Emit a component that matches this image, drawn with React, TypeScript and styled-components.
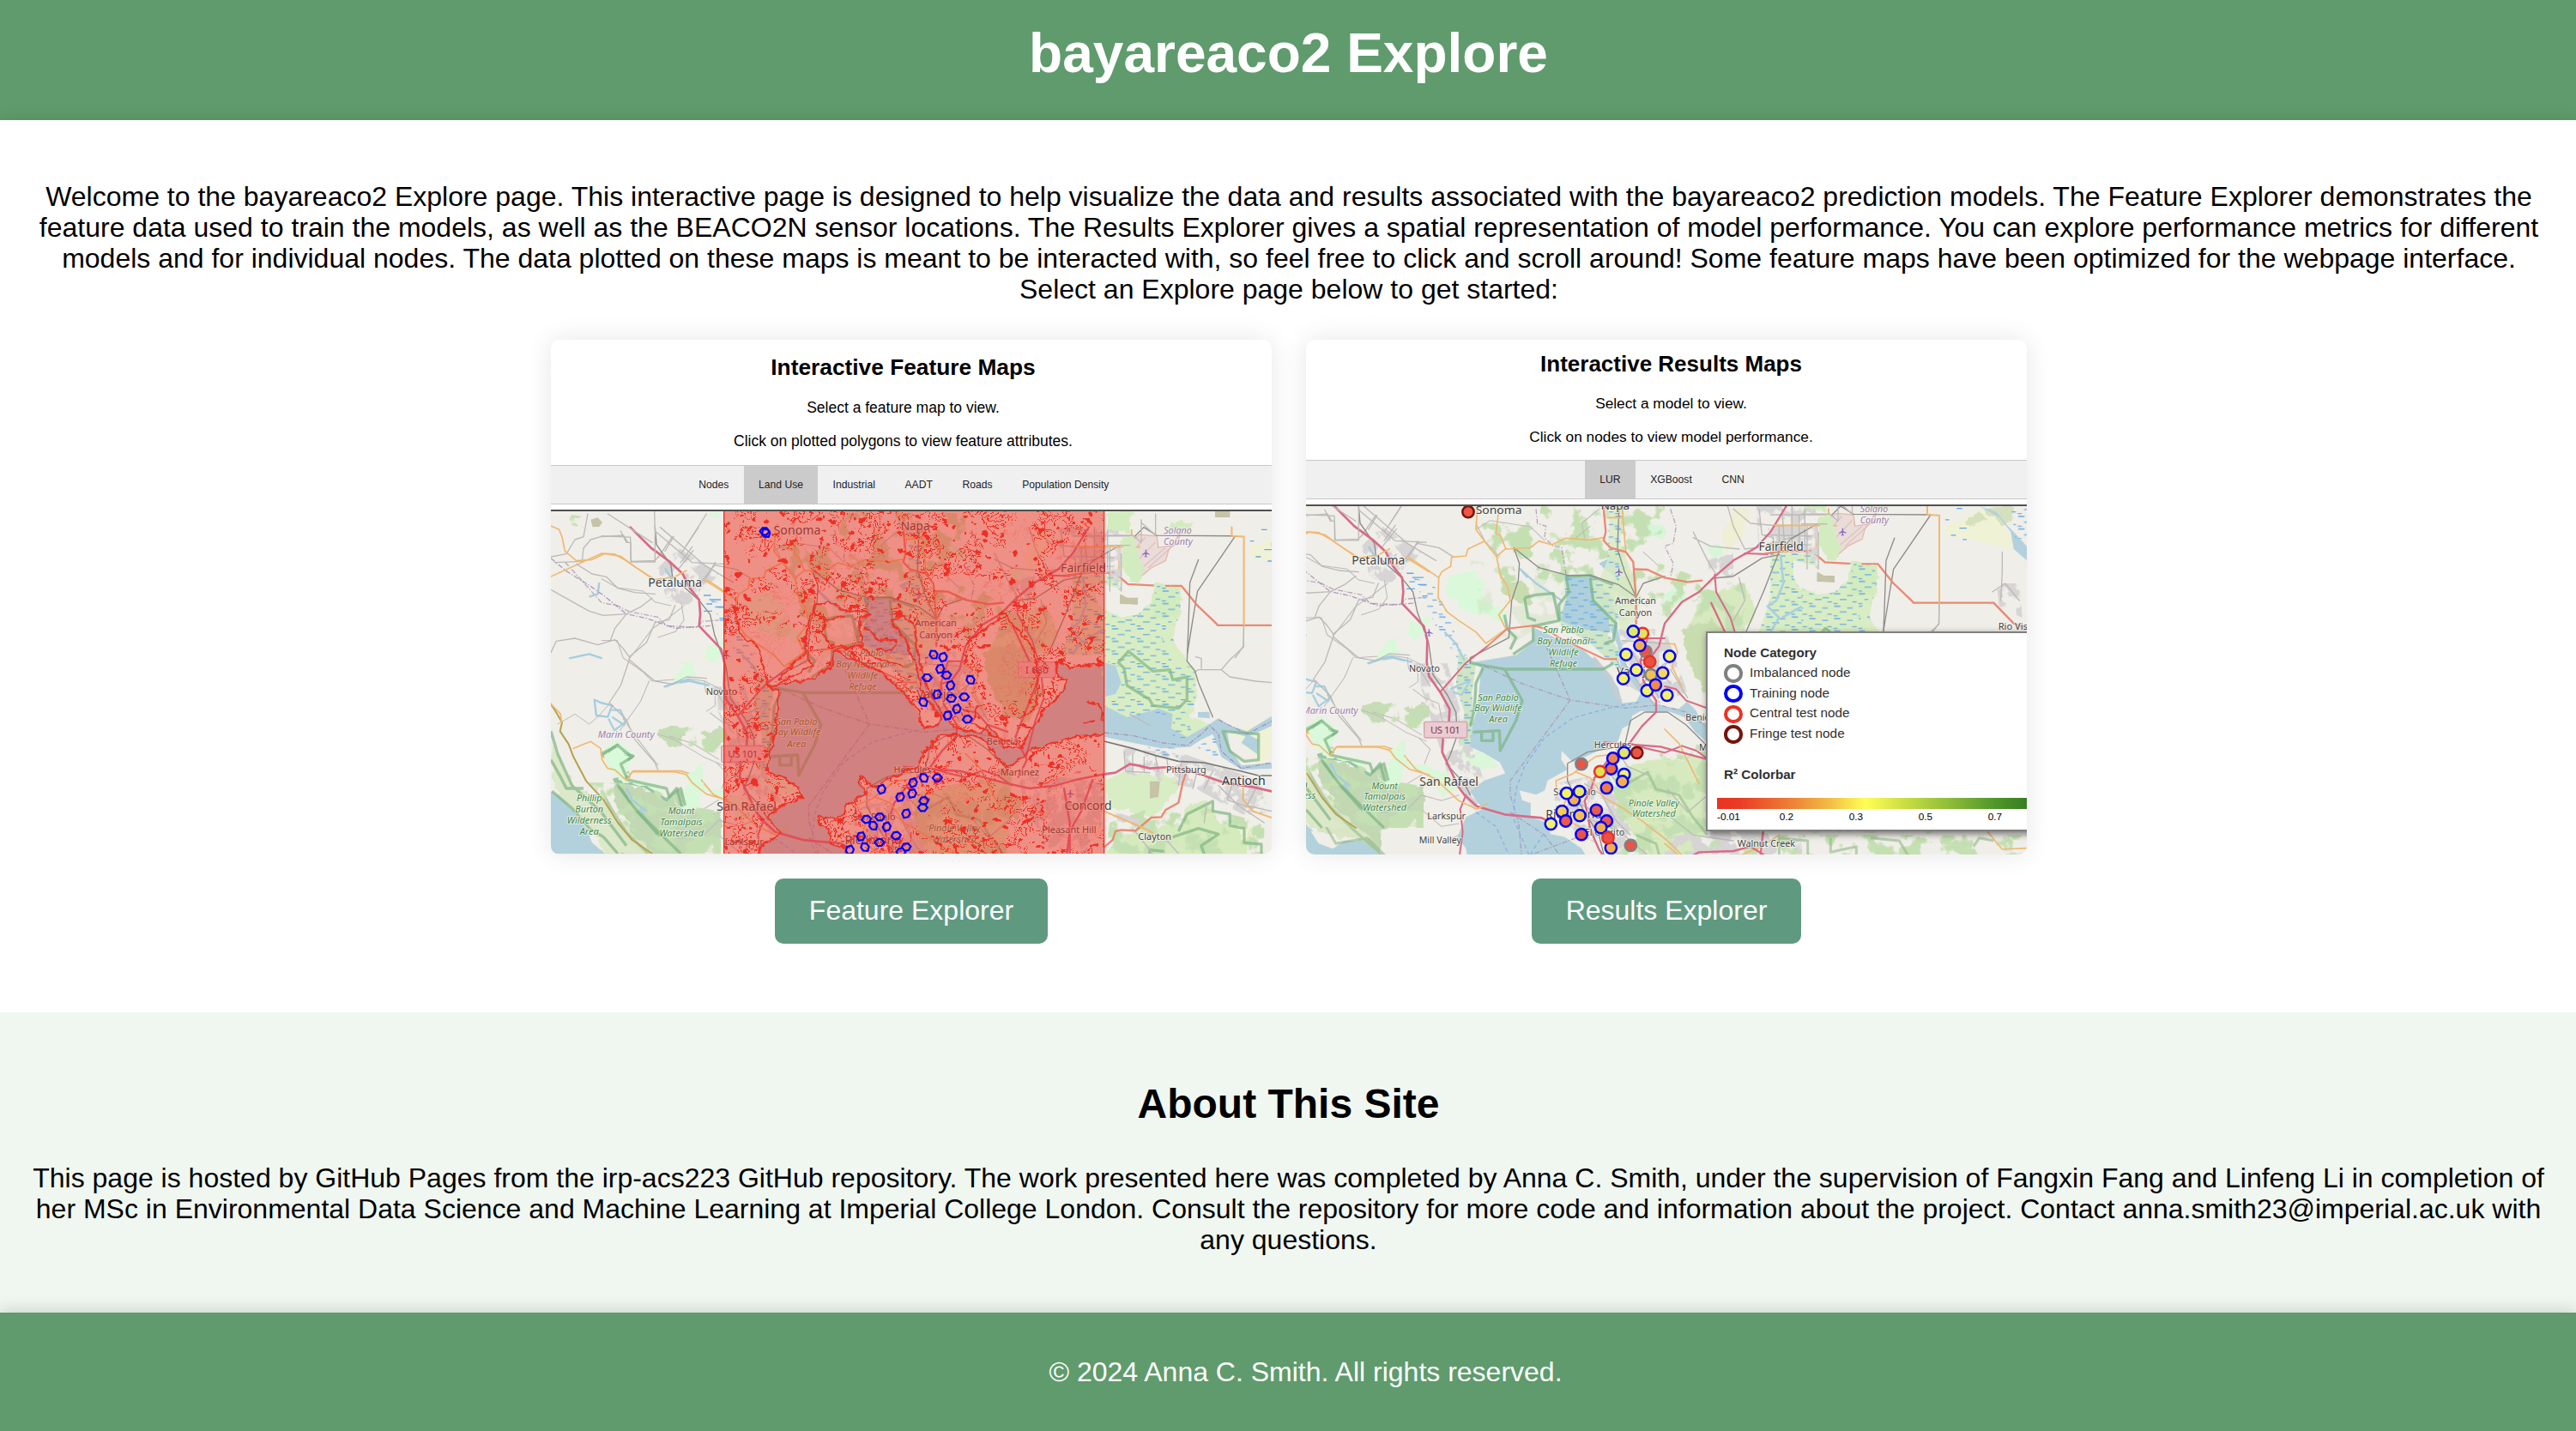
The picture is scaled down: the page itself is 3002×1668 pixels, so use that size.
import React from 'react';
import styled, { createGlobalStyle } from 'styled-components';
import { MdAirplanemodeActive } from 'react-icons/md';

const GlobalStyle = createGlobalStyle`
  * { box-sizing: border-box; }
  body {
    margin: 0;
    background: #fff;
    color: #000;
    font-family: Arial, "Liberation Sans", sans-serif;
    font-size: 32px;
    line-height: 36px;
  }
`;

const Page = styled.div`
  display: flex;
  flex-direction: column;
  min-height: 1668px;
`;

const Header = styled.header`
  height: 140px;
  padding: 26px 0 0 1px;
  background: #5f9b6c;
  color: #fff;
  text-align: center;
`;

const Title = styled.h1`
  margin: 0;
  font-size: 64px;
  line-height: 73px;
`;

const Main = styled.main`
  position: relative;
  height: 1040px;
  padding: 71px 39px 0 41px;
  background: #fff;
  box-shadow: 0 0 20px rgba(0, 0, 0, 0.1);
  text-align: center;
`;

const Paragraph = styled.p`
  margin: 0;
`;

const Explorers = styled.div`
  display: flex;
  justify-content: center;
  gap: 40px;
  margin-top: 41px;
`;

const Explorer = styled.div`
  display: flex;
  flex-direction: column;
  align-items: center;
  gap: 28px;
`;

const Card = styled.div`
  display: flex;
  flex-direction: column;
  width: 840px;
  height: 600px;
  overflow: hidden;
  border-radius: 10px;
  background: #fff;
  box-shadow: 0 0 30px rgba(0, 0, 0, 0.1);
`;

const CardHead = styled.div<{ $height: number; $top: number; $left?: number; $right?: number }>`
  flex: none;
  height: ${(p) => p.$height}px;
  padding: ${(p) => `${p.$top}px ${p.$right ?? 0}px 0 ${p.$left ?? 0}px`};
`;

const CardTitle = styled.h3<{ $size: number }>`
  margin: 0 0 21.5px;
  font-size: ${(p) => p.$size}px;
  line-height: 30px;
`;

const CardLine = styled.p<{ $size: number }>`
  margin: 0 0 19.3px;
  font-size: ${(p) => p.$size}px;
  line-height: 20px;
`;

const TabBar = styled.div<{ $start: number }>`
  display: flex;
  flex: none;
  height: 46px;
  padding-left: ${(p) => p.$start}px;
  border-top: 1px solid #c8c8c8;
  border-bottom: 1px solid #c8c8c8;
  background: #f0f0f0;
`;

const Tab = styled.span<{ $active?: boolean }>`
  padding: 0 17.3px;
  background: ${(p) => (p.$active ? '#cbcbcb' : 'transparent')};
  color: #222;
  font-size: 12.15px;
  line-height: 45px;
  white-space: nowrap;
`;

const MapFrame = styled.div`
  position: relative;
  flex: 1;
  min-height: 0;
  margin-top: 6px;
  border-top: 2px solid #505050;
  overflow: hidden;
  background: #f0eee8;
  svg { display: block; }
`;

const Button = styled.a`
  padding: 19px 40px 21px;
  border-radius: 10px;
  background: #5f9a80;
  color: #fff;
  white-space: nowrap;
`;

const About = styled.section`
  position: relative;
  height: 350px;
  padding: 79px 33px 0 34px;
  background: #f0f7f1;
  text-align: center;
`;

const Heading = styled.h2`
  margin: 0 0 40px;
  font-size: 48px;
  line-height: 56px;
`;

const Footer = styled.footer`
  position: relative;
  height: 138px;
  padding: 51px 0 0 41px;
  background: #5f9b6c;
  color: #fff;
  box-shadow: 0 0 20px rgba(0, 0, 0, 0.2);
  text-align: center;
`;

const Legend = styled.div`
  position: absolute;
  left: 466px;
  top: 146px;
  width: 460px;
  height: 233px;
  padding: 13px 0 0 19px;
  border: 2px solid #808080;
  background: #fff;
  box-shadow: 2px 3px 8px rgba(0, 0, 0, 0.55);
  color: #303030;
  font-size: 15.3px;
  text-align: left;
`;

const LegendTitle = styled.div`
  font-weight: bold;
  font-size: 15.2px;
  line-height: 19px;
`;

const LegendRows = styled.div`
  margin: 3px 0 24.5px;
`;

const LegendRow = styled.div`
  display: flex;
  align-items: center;
  gap: 8.5px;
  height: 23.8px;
`;

const Ring = styled.span<{ $color: string }>`
  width: 21.6px;
  height: 21.6px;
  border: 4.4px solid ${(p) => p.$color};
  border-radius: 50%;
`;

const LegendLabel = styled.span`
  padding-bottom: 2.4px;
  line-height: 18px;
`;

const ColorBar = styled.div`
  height: 13px;
  margin: 18px 0 2px -8px;
  background: linear-gradient(
    to right,
    #ea3323 0, #ea3a24 25px, #ee8436 90px, #f3bb45 130px, #fffe54 173px,
    #cfe045 215px, #8fbd38 270px, #4f962a 325px, #377e22 361px
  );
`;

const Scale = styled.div`
  display: flex;
  margin-left: -8px;
  color: #000;
  font-size: 11.8px;
  line-height: 14px;
`;

const Tick = styled.span<{ $width: number }>`
  width: ${(p) => p.$width}px;
`;

/* Map geometry: three map units make one pixel of the card. */

const MAP_FONT = '"Noto Sans", "Open Sans", sans-serif';
const NORTH = 'scale(1.0142) translate(174 67)';
const SOUTH = 'translate(-174 -67) scale(0.986)';
const CENTRE = 'translate(660 630)';

const WATER = '#b3d1dc';
const BAY =
  'M165 632L330 605L385 560L395 510L440 530L500 560L570 590L640 655L690 720L705 775L755 770L770 740L700 650L688 570L655 500L650 460L610 430L600 400L640 385L675 420L690 520L720 640L780 740L825 778L865 790L905 796L935 770L965 800L990 845L1055 848L1070 810L1130 720L1200 640L1213 612L1180 600L1172 545L1220 568L1345 555L1345 800L1240 808L1150 835L1080 860L1040 890L1010 918L965 880L925 825L870 805L770 803L740 820L735 850L705 865L690 910L640 935L560 972L530 985L490 945L488 975L512 1010L440 1050L430 1085L400 1100L340 1085L350 1120L380 1130L380 1180L440 1200L450 1240L500 1250L560 1290L590 1340L160 1340L150 1290L120 1250L150 1180L210 1150L165 1090L215 1050L290 1025L270 985L210 950L165 930L170 860L190 800L205 650Z';

type Line = { d: string; c: string; w: number };

const MOTOR = '#d96a86';
const TRUNK = '#e98972';
const PRIMARY = '#f0b872';
const MINOR = '#bcbab9';
const RAIL = '#8d8b8a';

const northRoads: Line[] = [
  { d: 'M-109 800L66 720L110 722L150 745L230 800M430 812L470 838L530 880L528 950L560 1000L600 1030L660 1070L695 1110L765 1060M530 880L540 860L572 840L575 808L625 804L632 780L690 752L715 785L732 805L765 778M690 752L660 712L665 640M732 805L745 870L770 910L780 960L740 1010L765 1060M740 640L730 726L745 732L765 780L850 775L880 752L925 765L975 742L1060 748L1106 740', c: PRIMARY, w: 5 },
  { d: 'M1172 640L1176 700L1184 786M1118 670L1172 670', c: PRIMARY, w: 5 },
  { d: 'M165 630L235 700L300 748L345 790L370 840L402 880L406 930L402 970L440 1010L478 1050L490 1100L488 1175L496 1225L535 1280L568 1340L565 1400L545 1440L542 1490L570 1550L598 1610L620 1640L664 1680L760 1708L890 1720L920 1735', c: MOTOR, w: 8 },
  { d: 'M625 1640L605 1690L614 1770L603 1850M535 1280L625 1178L700 1120', c: MOTOR, w: 6 },
  { d: 'M700 1120L770 1058L860 1048L900 1058L960 1095L1110 1165L1150 1165', c: TRUNK, w: 6 },
  { d: 'M1106 635L1114 720L1106 750L1130 775L1184 790L1210 825L1220 960L1220 1040M1215 850L1260 852L1320 880L1400 895L1450 890', c: TRUNK, w: 7 },
  { d: 'M1745 630L1690 720L1640 775L1560 820L1490 880L1440 930L1380 965L1320 1040L1300 1120L1270 1160L1235 1170L1245 1240L1290 1310L1290 1350L1240 1400L1200 1455L1120 1520L1075 1580L1062 1620L1040 1660L1060 1760L1090 1830L1110 1860', c: MOTOR, w: 7 },
  { d: 'M1495 870L1500 930L1550 1020L1580 1120L1590 1220L1560 1300L1530 1420M1235 1170L1260 1092L1320 1092M1320 1260L1360 1270L1395 1310L1465 1335', c: MOTOR, w: 6 },
  { d: 'M1200 1460L1260 1478L1320 1492L1380 1468L1430 1485L1480 1520M1600 795L1680 798', c: MOTOR, w: 6 },
  { d: 'M1670 796L1740 786L1835 787L1880 826L1990 832L2065 832L2120 900L2185 962L2190 968L2470 968L2540 1040L2590 1060', c: TRUNK, w: 7 },
  { d: 'M1705 697L1920 698M1893 640L1893 697M1850 700L1850 786M2238 630L2238 660L2280 662L2280 970', c: PRIMARY, w: 6 },
  { d: 'M66 1420L110 1435L120 1470L150 1500L175 1470L340 1470L400 1490L450 1550L520 1585L600 1660L664 1690L700 1670', c: PRIMARY, w: 5 },
  { d: 'M942 1620L940 1590L1000 1565L1030 1540L1080 1505L1120 1500M980 1640L960 1700L1000 1740L1060 1770M1010 1560L1060 1580L1110 1650L1180 1690L1240 1730L1330 1800L1380 1850', c: PRIMARY, w: 5 },
  { d: 'M1320 1110L1355 1112L1365 1140L1345 1190L1380 1260M1320 1410L1370 1460L1440 1600M1585 1850L1660 1820L1720 1780M1320 1810L1380 1860M2450 1770L2500 1830L2586 1826', c: PRIMARY, w: 5 },
  { d: 'M1400 1860L1440 1840L1560 1836L1620 1820L1700 1870M1655 1850L1665 1760', c: MOTOR, w: 7 },
];

const northRails: Line[] = [
  { d: 'M250 630L255 690L305 760L310 800L400 880L440 930L455 1000L495 1110L510 1220L560 1290L590 1350L595 1430L570 1500L555 1530L620 1600L640 1640', c: RAIL, w: 4 },
  { d: 'M792 775L812 830L808 890L785 960L775 1090L640 1160L640 1180M792 775L880 845L980 872L1060 872L1160 905L1220 948L1245 900L1320 875M1160 640L1155 780L1180 860L1220 948', c: RAIL, w: 4 },
  { d: 'M1935 630L1900 665L1760 745L1720 790L1665 930L1605 1068M1935 630L1980 658L2250 660L2120 850L2110 910L2085 1065M1720 800L1660 812L1560 875L1490 882', c: RAIL, w: 4 },
  { d: 'M980 1590L980 1530L1050 1490L1180 1468L1200 1380L1250 1350L1330 1350L1395 1395L1470 1470M980 1590L1010 1650L1090 1780L1110 1860', c: RAIL, w: 4 },
];

const northMinor: Line[] = [
  { d: 'M66 660L165 664L168 748L250 745L262 730M268 630L420 760L520 820M400 630L340 720M310 662L260 735M382 710L330 775M460 755L400 830M455 760L530 775L578 805', c: MINOR, w: 4 },
  { d: 'M66 808L120 838L210 850L250 888L305 900M66 1020L120 1020L140 1080L210 1130L240 1160L360 1152L420 1160L500 1200M160 1085L195 1040L240 980L300 940L350 900M230 1160L200 1230L130 1330M140 1290L190 1360L260 1450M340 890L350 950L320 990L260 1010', c: MINOR, w: 3 },
  { d: 'M420 1160L425 1200L470 1210L500 1260M440 1270L480 1300L530 1320L545 1400L520 1440M300 1350L380 1375L470 1430M460 1440L500 1480L480 1530M420 1600L470 1570M330 1700L420 1690L470 1640L540 1660L600 1640M480 1700L540 1750L600 1740M560 1800L600 1780', c: MINOR, w: 3 },
  { d: 'M660 712L710 680L850 702L880 730L900 750M1040 740L1030 690L1090 640M660 690L690 750L735 800M1010 740L1060 700M1245 790L1300 840', c: MINOR, w: 3 },
  { d: 'M1540 630L1560 700L1600 780L1680 770L1760 740M1420 720L1470 820L1500 870M1420 740L1480 770L1580 780M1560 640L1620 690L1730 700M1650 640L1660 730L1700 740L1700 800M1730 640L1740 780M1790 660L1790 790M1660 730L1830 735M1680 760L1830 765M1720 700L1720 790M1765 630L1765 790M1810 640L1810 780', c: MINOR, w: 4 },
  { d: 'M2280 970L2278 1040L2250 1080M2500 790L2500 860L2495 960M2465 930L2510 900L2560 960M1690 660L1900 660M1580 880L1600 960L1560 1030', c: MINOR, w: 4 },
  { d: 'M960 1640L1080 1700L1140 1760M1000 1620L1020 1700L1090 1740M940 1680L1010 1720M1040 1600L1100 1640L1150 1730L1200 1780M1100 1540L1160 1600M1150 1480L1190 1540L1260 1570M1120 1730L1200 1800L1260 1850M1330 1620L1400 1700L1470 1640M1320 1700L1420 1780L1560 1800', c: MINOR, w: 4 },
  { d: 'M1170 1100L1320 1110M1200 1130L1300 1300M1180 1180L1280 1320M1230 1110L1340 1250M1320 1180L1230 1260M1350 1140L1260 1290M1340 1200L1400 1300M1150 1160L1190 1260', c: MINOR, w: 4 },
];

const southRoads: Line[] = [
  { d: 'M66 702L95 715L106 745L115 790L155 824L210 820L255 799L310 808L360 845L430 890L500 880L540 858M600 890L680 940', c: PRIMARY, w: 5 },
  { d: 'M66 1325L88 1360L105 1390L98 1420L128 1465L145 1510L190 1595L250 1660L300 1740L350 1800L420 1848', c: '#b5a24f', w: 6 },
  { d: 'M66 1325L100 1360L103 1390M145 1480L205 1456L240 1480L245 1520L265 1550L290 1555L330 1592L350 1562L500 1562L540 1572L560 1600L610 1640L680 1660', c: PRIMARY, w: 5 },
  { d: 'M2000 1570L2040 1565L2090 1535L2120 1540L2160 1550L2230 1545L2320 1565L2420 1600L2520 1615L2586 1630L2800 1700', c: MOTOR, w: 8 },
  { d: 'M2000 1825L2030 1800L2040 1770L2060 1765L2110 1768L2165 1722L2200 1720L2215 1695L2260 1670L2275 1600L2285 1570', c: TRUNK, w: 7 },
  { d: 'M2000 1700L2060 1725L2130 1755L2170 1775M2486 1620L2486 1660L2520 1700L2586 1722', c: PRIMARY, w: 6 },
  { d: 'M1300 1545L1500 1560L1650 1600L1740 1620L1830 1610L1900 1590L2000 1570M1860 1620L1880 1740L1880 1848M1960 1590L1920 1700L1880 1770L1870 1848M1700 1580L1730 1520L1690 1440L1770 1240L1680 1050', c: MOTOR, w: 7 },
];

const southRails: Line[] = [
  { d: 'M2000 1455L2100 1480L2180 1505L2260 1525L2350 1530L2480 1560L2540 1575L2586 1575', c: '#757575', w: 5 },
  { d: 'M2330 820L2300 900L2295 1050L2290 1175L2318 1210L2330 1250L2380 1370', c: RAIL, w: 4 },
];

const southMinor: Line[] = [
  { d: 'M66 810L120 800L150 750L180 740L195 660M80 830L175 826L180 780L205 750L240 740L320 735L335 760L345 760L345 828L430 828L430 700M265 660L420 760M310 720L330 760M428 650L430 720L560 830L670 835M495 740L465 790M560 775L520 830M610 660L540 770M640 830L600 900', c: MINOR, w: 4 },
  { d: 'M155 835L210 870L260 880L300 920L360 935L430 940M66 925L110 950L200 1000L250 1015L330 1010L380 985L420 955M66 1145L85 1105L150 1095L230 1118L290 1100L318 1130L340 1160L340 1170L430 1245L490 1255L540 1230L610 1235M340 1160L400 1110L430 1040L480 1030L500 980M330 1010L290 1060L275 1100M340 1170L310 1260L270 1320L330 1380L360 1450L430 1530L440 1555', c: MINOR, w: 4 },
  { d: 'M90 1395L150 1360L200 1395L230 1370L270 1325M440 1430L500 1450L600 1510L670 1540M610 1350L640 1330L640 1280', c: MINOR, w: 3 },
  { d: 'M2320 1210L2330 1205L2410 1205L2440 1230L2530 1245L2586 1250M2410 1205L2440 1170L2488 1125L2488 1050M2320 1160L2340 1165L2340 1200', c: MINOR, w: 4 },
  { d: 'M2070 1490L2075 1560L2160 1565M2100 1500L2100 1560M2140 1510L2140 1560M2180 1510L2190 1560M2220 1520L2225 1560M2270 1530L2260 1610M2330 1540L2310 1620M2380 1560L2350 1620M2400 1610L2470 1680L2560 1740M2450 1600L2430 1660L2520 1690M2540 1600L2500 1680L2586 1700M2360 1670L2350 1740M2200 1780L2260 1848M2100 1760L2170 1848', c: MINOR, w: 4 },
  { d: 'M2130 680L2130 760L2100 735L2000 735M2180 660L2180 735L2130 690M2000 770L2090 770M2060 800L2060 930M2020 780L2020 930M2090 1360L2160 1400', c: MINOR, w: 4 },
];

const Lines = ({ items }: { items: Line[] }) => (
  <>
    {items.map((l, i) => (
      <path key={i} d={l.d} fill="none" stroke={l.c} strokeWidth={l.w} strokeLinejoin="round" strokeLinecap="round" />
    ))}
  </>
);

type LabelProps = {
  x: number; y: number; w: number; s?: number; c?: string; i?: boolean; children: string;
};

const Label = ({ x, y, w, s = 34, c = '#444', i, children }: LabelProps) => (
  <text
    x={x} y={y} textAnchor="middle" textLength={w} lengthAdjust="spacingAndGlyphs"
    fontFamily={MAP_FONT} fontSize={s} fontStyle={i ? 'italic' : 'normal'} fill={c}
    stroke="#f6f5f1" strokeWidth={6} strokeOpacity={0.75} paintOrder="stroke" strokeLinejoin="round"
  >
    {children}
  </text>
);

const Plane = ({ x, y }: { x: number; y: number }) => (
  <MdAirplanemodeActive x={x - 24} y={y - 24} width={48} height={48} color="#8a69c4" />
);

const PARK = '#3d8a46';
const COUNTY = '#a080b0';

const Basemap = ({ id }: { id: string }) => {
  const f = (name: string) => `url(#${id}-${name})`;
  return (
    <>
      <defs>
        <pattern id={`${id}-marsh`} width="88" height="44" patternUnits="userSpaceOnUse">
          <path d="M4 6h22M50 12h20M24 26h24M68 34h16M2 40h14" stroke="#65a9e6" strokeWidth="4" />
        </pattern>
        <filter id={`${id}-mottle`} x="0" y="0" width="1" height="1" colorInterpolationFilters="sRGB">
          <feTurbulence type="fractalNoise" baseFrequency="0.014" numOctaves="5" seed="8" result="n" />
          <feColorMatrix in="n" values="0 0 0 0 0.77  0 0 0 0 0.88  0 0 0 0 0.70  0 0 0 12 -6.1" result="m" />
          <feComposite in="m" in2="SourceGraphic" operator="in" />
        </filter>
        <filter id={`${id}-town`} x="0" y="0" width="1" height="1" colorInterpolationFilters="sRGB">
          <feTurbulence type="fractalNoise" baseFrequency="0.02" numOctaves="4" seed="3" result="n" />
          <feColorMatrix in="n" values="0 0 0 0 0.84  0 0 0 0 0.83  0 0 0 0 0.83  0 0 0 12 -5.5" result="m" />
          <feComposite in="m" in2="SourceGraphic" operator="in" />
        </filter>
        <filter id={`${id}-rough`} x="-0.1" y="-0.1" width="1.2" height="1.2">
          <feTurbulence type="fractalNoise" baseFrequency="0.03" numOctaves="3" seed="5" />
          <feDisplacementMap in="SourceGraphic" scale="34" xChannelSelector="R" yChannelSelector="G" />
        </filter>
      </defs>

      <rect x="-200" y="500" width="3100" height="1500" fill="#f0eee8" />

      <g transform={NORTH}>
        <g filter={f('rough')}>
          <path d="M560 880L650 850L690 900L690 960L770 1000L760 1040L640 1000L560 950Z" fill="#daf8da" />
          <path d="M340 1100L380 1090L390 1150L350 1160ZM420 1040L500 1020L480 1080L430 1080ZM66 1400L120 1370L175 1410L150 1480L90 1450Z" fill="#daf8da" />
          <path d="M1220 680L1320 700L1320 750L1250 730ZM1465 770L1510 760L1530 800L1480 810ZM1320 930L1380 920L1400 960L1340 980Z" fill="#d6f6d8" />
          <path d="M350 1480L420 1450L420 1520L560 1560L600 1620L540 1640L480 1560L380 1530ZM600 1480L700 1500L740 1540L650 1560Z" fill="#dbf6d9" />
          <path d="M260 1330L300 1310L350 1330L340 1380L290 1390ZM410 1340L490 1320L500 1360L440 1400Z" fill="#c6dcb6" />
          <path d="M110 1510L200 1530L290 1570L340 1540L360 1600L480 1610L480 1700L420 1740L330 1760L320 1848L250 1800L180 1700L110 1580Z" fill="#c1d8b3" />
          <path d="M-109 1560L-20 1530L66 1560L130 1640L230 1740L300 1800L120 1780L66 1710L0 1640Z" fill="#d9e6c6" />
          <path d="M1130 1560L1250 1520L1465 1500L1465 1760L1400 1860L1280 1860L1200 1760Z" fill="#d7eabf" />
          <path d="M1500 930L1600 900L1640 1000L1600 1068L1400 1060L1440 980Z" fill="#d7eabf" />
          <path d="M1380 1060L1480 1030L1560 1080L1590 1200L1540 1300L1460 1280L1400 1180ZM740 880L830 900L860 980L760 940ZM1440 1560L1520 1560L1500 1640L1440 1620Z" fill="#c9dcb0" />
          <path d="M1560 640L1620 640L1590 740L1530 790L1520 740Z" fill="#eeefd3" />
          <path d="M2310 690L2440 640L2540 740L2540 785L2400 750L2310 740Z" fill="#f0f2d6" />
          <path d="M2440 640L2500 630L2540 630L2530 690L2500 700ZM2370 690L2420 650L2450 670L2400 700Z" fill="#d5e0bd" />
        </g>
        <path d="M680 690L860 680L920 760L1060 740L1100 860L970 900L860 880L740 900Z" fill="#000" filter={f('mottle')} />
        <path d="M900 580L1320 580L1320 700L1180 1040L960 860L860 760Z" fill="#000" filter={f('mottle')} />
        <path d="M1220 800L1440 880L1600 900L1620 1068L1400 1068L1220 960Z" fill="#000" filter={f('mottle')} />
        <path d="M1400 1450L1480 1480L1480 1780L2586 1780L2586 1860L1160 1860L1080 1600Z" fill="#000" filter={f('mottle')} />
        <path d="M640 820L960 860L980 1000L800 1100L680 1060Z" fill="#000" opacity="0.35" filter={f('mottle')} />

        <g filter={f('town')}>
          <path d="M260 770L330 700L470 790L420 850L360 900L290 880Z" />
          <path d="M1640 630L1850 630L1850 800L1650 800ZM1470 820L1560 790L1560 880L1480 890Z" />
          <path d="M1160 1060L1320 1060L1400 1280L1300 1320L1180 1250Z" />
          <path d="M940 1600L1120 1560L1200 1760L1160 1850L1020 1780L930 1700Z" />
          <path d="M440 1180L560 1180L620 1400L700 1620L660 1700L560 1560L480 1300Z" />
          <path d="M1320 1790L1560 1750L1800 1800L1800 1860L1320 1860ZM2480 900L2560 900L2570 1020L2490 980Z" />
        </g>
      </g>

      <path d={BAY} fill={WATER} transform={CENTRE} />

      <g transform={NORTH}>
        <path d="M66 1740L110 1810L160 1828L200 1800L260 1800L330 1848L66 1860Z" fill={WATER} />
        <path d="M965 870L1080 875L1145 920L1150 1030L1120 1080L1165 1140L1160 1200L1060 1110L960 1048L948 1020L975 960Z" fill="#cfe6c5" />
        <path d="M975 875L1060 880L1075 960L1120 1000L1130 1070L1020 1060L955 1030L980 940ZM1130 810L1165 830L1150 880L1110 850L1090 830Z" fill="#aed0dc" />
        <path d="M1130 640L1170 640L1165 760L1200 850L1240 950L1200 1080L1165 1060L1130 940L1085 900L1120 820Z" fill="#d9ebc5" opacity="0.8" />
        <path d="M965 870L1080 875L1145 920L1160 1040L1130 1090L1170 1140L1165 1210L1060 1110L960 1048L948 1020L975 960ZM1125 640L1170 640L1165 760L1160 900L1120 820ZM440 880L510 900L560 1000L610 1140L640 1160L600 1170L520 1050Z" fill={f('marsh')} />
        <path d="M600 1140L660 1180L645 1290L655 1350L640 1460L600 1470L620 1350L590 1260Z" fill="#cfe5c3" />
        <path d="M600 1140L660 1180L645 1290L655 1350L640 1460L600 1470L620 1350L590 1260Z" fill={f('marsh')} />
        <path d="M1070 1160L1130 1230L1165 1315" stroke="#c6cdd0" strokeWidth="14" fill="none" />
        <path d="M1690 790L1850 800L1850 840L1770 820L1770 880L1800 930L1860 940L1960 920L1970 840L2060 830L2060 930L2030 1000L2060 1070L1650 1070L1690 950Z" fill="#d9edc4" />
        <path d="M1690 790L1850 800L1850 840L1770 820L1770 880L1800 930L1860 940L1960 920L1970 840L2060 830L2060 930L2030 1000L2060 1070L1650 1070L1690 950Z" fill={f('marsh')} />
        <path d="M1725 800L1735 900L1710 960L1680 980L1720 1020L1690 1070M1730 1020L1800 980L1880 1000L1930 990L1960 1040L2030 960M1900 1000L1950 1070" stroke="#a9cfe0" strokeWidth="8" fill="none" />
        <path d="M2420 630L2480 650L2520 700L2540 720L2586 770L2586 820L2540 780L2530 720L2490 670Z" fill={WATER} />
        <path d="M2530 630L2586 630L2586 750L2545 740Z" fill={f('marsh')} />
        <path d="M1880 690L1920 655L1980 660L1985 700L2050 690L2060 650L2020 710L2010 745L1960 770L1925 800L1890 770Z" fill="#e9dcd9" stroke="#e5b7ac" strokeWidth="4" />
        <path d="M1890 720L1940 665M1900 760L1975 680M1910 785L2010 700M1950 770L2040 690" stroke="#dfb9ba" strokeWidth="3" />
        <path d="M1855 860L1880 875L1914 873L1914 896L1853 894Z" fill="#c5c3a5" />
        <path d="M280 1180L310 1170L370 1160L410 1170M570 1270L640 1240L610 1290L580 1280M100 1260L130 1260L150 1300L110 1330L90 1290M550 1070L590 1110L620 1170M840 880L815 850L870 900L960 960M150 1530L200 1600L220 1640" stroke="#a9cfe0" strokeWidth="7" fill="none" strokeLinejoin="round" />

        <g fill="none" stroke="#7eb58a" strokeWidth="10" strokeOpacity="0.75" strokeLinejoin="round">
          <path d="M640 1178L700 1190L760 1200L1105 1200L1140 1180M685 1195L660 1250L655 1340L640 1400M760 1200L822 1310L800 1380L745 1485L742 1415L650 1420M680 1420L680 1450L720 1450L720 1420" />
          <path d="M830 950L870 940L930 935L940 980L950 1030L860 1050L860 1100L790 1148M830 950L842 1020L870 1030M760 1010L770 1060L800 1090L780 1130" />
          <path d="M975 876L1060 872L1140 905M975 876L985 930L950 975L952 1030M1060 880L1070 960L1150 1040L1140 1100L1110 1110" />
          <path d="M66 1420L120 1380L140 1410L175 1418L145 1440L160 1490L110 1500L180 1600L270 1700M110 1505L210 1520L290 1570L325 1530L350 1620" />
        </g>
        <g fill="none" stroke="#91b98b" strokeWidth="9" strokeOpacity="0.6" strokeLinejoin="round">
          <path d="M66 1540L100 1600L150 1680L230 1760L330 1848M66 1650L90 1720L130 1740L170 1810L280 1790L340 1850M1190 1600L1260 1560L1290 1620L1370 1640L1420 1720L1470 1780M1220 1780L1290 1810L1300 1848M1720 1850L1720 1790L1820 1800L1820 1848M1900 1790L1900 1840L1990 1820L1990 1860M2040 1790L2140 1800L2170 1850M2400 1820L2420 1790L2470 1800" />
        </g>
        <g fill="none" stroke="#a78fb0" strokeWidth="4" strokeDasharray="18 6 4 6" strokeOpacity="0.75">
          <path d="M-60 750L66 890L120 900L160 920L260 940L290 970L400 975L410 955L470 950M870 640L875 690L905 700L900 740L930 770L960 775L975 870M1340 640L1360 700L1350 760L1320 770L1350 830L1340 880" />
          <path d="M690 1190L820 1250L990 1308L1180 1336L1300 1325L1395 1350L1465 1400M905 1120L990 1308L780 1590L780 1640L810 1740L820 1860M780 1700L900 1780L960 1860M1010 1790L850 1850" />
        </g>
        <path d="M1230 1316L1130 1335L1000 1370L900 1440L830 1540L800 1620L790 1720L850 1860M660 1700L730 1750L780 1860M850 1848L900 1770" fill="none" stroke="#8fb0e4" strokeWidth="4" strokeDasharray="14 10" />
        <Lines items={northMinor} />
        <Lines items={northRails} />
        <Lines items={northRoads} />
      </g>

      <g filter={f('rough')}>
        <path d="M2000 1000L2090 1040L2170 960L2190 900L2260 930L2270 1000L2230 1100L2320 1200L2320 1340L2300 1370L2380 1400L2310 1450L2200 1450L2000 1370Z" fill="#d9edc4" />
        <path d="M2170 920L2180 900L2270 920L2260 1030L2170 1020ZM2010 650L2100 650L2090 720L2010 720ZM2060 750L2110 730L2140 890L2090 900L2060 830ZM2230 690L2310 690L2310 720L2230 720Z" fill="#d3ecbf" />
        <path d="M2000 1590L2070 1560L2250 1580L2260 1620L2180 1720L2080 1700L2020 1680Z" fill="#d9edc4" />
        <path d="M2150 1760L2290 1740L2280 1690L2360 1660L2400 1740L2500 1750L2500 1860L2000 1860L2050 1790Z" fill="#d5eabd" />
        <path d="M610 650L660 660L640 680ZM605 1140L650 1130L665 1160L620 1180ZM540 1180L570 1190L540 1240L500 1260L490 1240ZM250 1510L300 1470L340 1520L330 1590L430 1600L520 1680L560 1560L600 1600L580 1680L540 1720L480 1640L320 1600L280 1560Z" fill="#daf8da" />
        <path d="M66 1460L90 1500L150 1620L220 1700L320 1790L380 1848L260 1848L200 1740L80 1620Z" fill="#dbe8c9" />
        <path d="M2470 1750L2540 1750L2540 1820L2480 1800Z" fill="#f0f2d6" />
        <path d="M2450 1420L2586 1380L2586 1500L2540 1540Z" fill="#eff2d5" />
      </g>
      <path d="M200 1600L300 1600L420 1620L540 1680L660 1700L660 1848L460 1848L340 1760L280 1700Z" fill="#000" filter={f('mottle')} />
      <path d="M440 1430L560 1400L580 1470L520 1480ZM590 1450L670 1420L670 1500L600 1490ZM120 660L180 670L180 710L140 700Z" fill="#000" filter={f('mottle')} />
      <path d="M2020 1740L2240 1660L2560 1740L2560 1860L2000 1860Z" fill="#000" filter={f('mottle')} />
      <g filter={f('town')}>
        <path d="M2070 1480L2280 1500L2540 1590L2580 1700L2500 1720L2320 1620L2080 1570ZM2000 1690L2160 1740L2160 1780L2020 1720ZM2000 780L2060 780L2060 930L2010 910ZM1700 1560L2000 1600L1980 1848L1820 1848L1720 1680Z" />
      </g>
      <path d="M205 680L230 673L246 690L235 705L212 706ZM2388 650L2440 650L2440 672L2388 672ZM2055 942L2080 953L2116 953L2118 977L2055 972ZM2160 1595L2195 1595L2190 1650L2160 1655Z" fill="#c5c3a8" />
      <path d="M66 1630L110 1660L150 1710L190 1760L210 1810L270 1860L66 1860Z" fill={WATER} />
      <path d="M2000 1180L2040 1190L2060 1250L2040 1290L2000 1300ZM2000 1330L2080 1370L2160 1350L2190 1340L2240 1360L2235 1410L2290 1440L2360 1400L2400 1375L2440 1400L2500 1420L2590 1365L2590 1400L2500 1440L2430 1420L2440 1480L2480 1540L2590 1530L2590 1550L2480 1555L2410 1510L2380 1430L2340 1450L2300 1475L2200 1480L2100 1460L2000 1440ZM2480 1460L2500 1430L2540 1450L2535 1500ZM2328 1353L2368 1352L2370 1375L2328 1372Z" fill={WATER} />
      <path d="M2000 1000L2090 1040L2170 960L2190 900L2260 930L2270 1000L2200 1080L2240 1180L2320 1200L2320 1340L2290 1360L2310 1440L2240 1450L2240 1360L2060 1370L2000 1330L2060 1290L2060 1200L2000 1170ZM2150 1470L2260 1480L2260 1510L2180 1510ZM2330 1470L2390 1440L2400 1510L2330 1500Z" fill={f('marsh')} />
      <path d="M218 1310L240 1320L280 1330L265 1370L225 1365ZM280 1370L325 1400M235 900L230 940L200 950M465 850L490 890M130 1165L200 1150L245 1165M465 1265L490 1255L540 1240L620 1260M330 1620L350 1660L400 1700" stroke="#a5cde0" strokeWidth="7" fill="none" strokeLinejoin="round" />
      <g fill="none" stroke="#7fb582" strokeWidth="10" strokeOpacity="0.7" strokeLinejoin="round">
        <path d="M66 1420L90 1500L140 1610L240 1700L330 1820M66 1520L100 1580L120 1620L180 1620M240 1500L300 1470L350 1510L310 1535L335 1590L380 1600L470 1620L480 1650L520 1620L535 1680M300 1610L360 1690L440 1770L520 1848M70 1630L140 1690L200 1760L250 1790L300 1848" />
        <path d="M2050 1180L2085 1140L2170 1210L2230 1205L2240 1240L2290 1230L2290 1310L2260 1340L2170 1330L2160 1310L2080 1260L2070 1200Z" />
        <path d="M2415 1420L2540 1430L2540 1520L2490 1525L2440 1490Z" />
        <path d="M2260 1770L2290 1710L2380 1665L2380 1700L2440 1710L2440 1750L2490 1760L2490 1810L2550 1815L2550 1860M2240 1790L2330 1760L2400 1780L2340 1820L2350 1850M2160 1848L2160 1835L2210 1840" />
      </g>
      <path d="M66 815L120 860L200 910L250 945L330 1010L400 1025L500 1060L640 1050M2000 1425L2100 1435L2200 1460L2290 1470L2340 1430L2370 1400L2400 1430L2410 1490L2480 1550L2586 1530M2400 1380L2500 1430L2586 1385" fill="none" stroke="#9c86b5" strokeWidth="4" strokeDasharray="18 6 4 6" strokeOpacity="0.8" />
      <path d="M600 945h25M620 960h40M610 975h20M640 985h30M600 1000h30M655 1025h20M2550 715h20M2560 785h26M2510 755h14M2530 810h18M2572 825h14" stroke="#62a8ea" strokeWidth="4" />
      <Lines items={southMinor} />
      <Lines items={southRails} />
      <Lines items={southRoads} />

      <g transform={NORTH}>
        <Plane x={1168} y={868} />
        <Plane x={504} y={1080} />
        <Plane x={1950} y={728} />
        <rect x="479" y="1384" width="150" height="56" rx="5" fill="#eaccd2" stroke="#d3a2ae" strokeWidth="4" />
        <text x="553" y="1425" textAnchor="middle" textLength="104" fontFamily={MAP_FONT} fontSize="34" fill="#7a3a50">US 101</text>
        <Label x={319} y={834} w={186} s={42}>Petaluma</Label>
        <Label x={740} y={656} w={162} s={40}>Sonoma</Label>
        <Label x={1147} y={641} w={100} s={40}>Napa</Label>
        <Label x={1727} y={786} w={157} s={42}>Fairfield</Label>
        <Label x={1218} y={972} w={143}>American</Label>
        <Label x={1218} y={1013} w={115}>Canyon</Label>
        <Label x={480} y={1209} w={108}>Novato</Label>
        <Label x={566} y={1608} w={206} s={42}>San Rafael</Label>
        <Label x={557} y={1725} w={134}>Larkspur</Label>
        <Label x={535} y={1810} w={148}>Mill Valley</Label>
        <Label x={1138} y={1476} w={130}>Hercules</Label>
        <Label x={1005} y={1641} w={148}>San Pablo</Label>
        <Label x={1002} y={1722} w={196} s={42}>Richmond</Label>
        <Label x={1110} y={1782} w={140}>El Cerrito</Label>
        <Label x={1215} y={1220} w={126} s={40}>Vallejo</Label>
        <Label x={1447} y={1379} w={108}>Benicia</Label>
        <Label x={1507} y={1485} w={134}>Martinez</Label>
        <Label x={1675} y={1822} w={202}>Walnut Creek</Label>
        <Label x={2553} y={1061} w={134}>Rio Vista</Label>
        <Label x={2052} y={652} w={97} c={COUNTY} i>Solano</Label>
        <Label x={2053} y={690} w={100} c={COUNTY} i>County</Label>
        <Label x={738} y={1310} w={142} c={PARK} i>San Pablo</Label>
        <Label x={738} y={1348} w={166} c={PARK} i>Bay Wildlife</Label>
        <Label x={738} y={1387} w={65} c={PARK} i>Area</Label>
        <Label x={966} y={1075} w={142} c={PARK} i>San Pablo</Label>
        <Label x={966} y={1113} w={184} c={PARK} i>Bay National</Label>
        <Label x={966} y={1152} w={106} c={PARK} i>Wildlife</Label>
        <Label x={966} y={1191} w={96} c={PARK} i>Refuge</Label>
        <Label x={1282} y={1679} w={178} c={PARK} i>Pinole Valley</Label>
        <Label x={1282} y={1717} w={152} c={PARK} i>Watershed</Label>
      </g>
      <rect x="1700" y="1178" width="130" height="54" rx="5" fill="#eaccd2" stroke="#d3a2ae" strokeWidth="4" />
      <text x="1765" y="1217" textAnchor="middle" textLength="80" fontFamily={MAP_FONT} fontSize="34" fill="#7a3a50">I 680</text>
      <Plane x={1890} y={1646} />
      <Label x={1944} y={1694} w={165} s={42}>Concord</Label>
      <Label x={1878} y={1777} w={190}>Pleasant Hill</Label>
      <Label x={2287} y={1565} w={140}>Pittsburg</Label>
      <Label x={2488} y={1608} w={152} s={42} c="#333">Antioch</Label>
      <Label x={2177} y={1799} w={116}>Clayton</Label>
      <Label x={329} y={1444} w={198} c={COUNTY} i>Marin County</Label>
      <Label x={200} y={1665} w={88} c={PARK} i>Phillip</Label>
      <Label x={200} y={1704} w={98} c={PARK} i>Burton</Label>
      <Label x={200} y={1743} w={156} c={PARK} i>Wilderness</Label>
      <Label x={200} y={1783} w={66} c={PARK} i>Area</Label>
      <Label x={522} y={1710} w={92} c={PARK} i>Mount</Label>
      <Label x={522} y={1749} w={148} c={PARK} i>Tamalpais</Label>
      <Label x={522} y={1788} w={155} c={PARK} i>Watershed</Label>
    </>
  );
};

const landUseNodes: [number, number][] = [
  [813, 721], [818, 727], [1222, 1623], [1287, 1650], [1169, 1728], [1216, 1720], [1193, 1750], [1240, 1754],
  [1150, 1788], [1273, 1785], [1215, 1809], [1164, 1825], [1111, 1835], [1308, 1708], [1308, 1825], [1290, 1842],
  [1404, 1152], [1437, 1161], [1427, 1202], [1449, 1224], [1381, 1233], [1533, 1240], [1463, 1260],
  [1416, 1291], [1466, 1305], [1511, 1300], [1368, 1318], [1485, 1342], [1453, 1365], [1522, 1378],
  [1417, 1583], [1370, 1583], [1332, 1600], [1329, 1638], [1370, 1663], [1366, 1687],
];

const pentagon = (x: number, y: number, turn: number) =>
  Array.from({ length: 6 }, (_, k) => {
    const a = turn + (k * Math.PI) / 3;
    const r = k % 3 === turn % 3 ? 16.5 : 14;
    return `${(x + r * Math.cos(a)).toFixed(1)},${(y + r * Math.sin(a)).toFixed(1)}`;
  }).join(' ');

/* Built-up and open zones where few land-use boundaries run: centre and radii. */
const openZones: [number, number, number, number][] = [
  [820, 1120, 120, 90], [930, 1190, 120, 60], [860, 960, 90, 50], [1080, 1070, 70, 60], [1250, 1700, 120, 110],
  [1450, 1250, 110, 120], [1900, 1700, 130, 160], [1900, 830, 110, 90], [1670, 1190, 100, 150], [1410, 1060, 90, 70],
  [920, 720, 80, 30], [1340, 705, 60, 30], [1600, 940, 110, 60], [1480, 920, 80, 60], [740, 1680, 90, 50],
  [1820, 1060, 60, 80], [1600, 1440, 90, 50], [1700, 1590, 90, 50], [1480, 1640, 60, 50], [1330, 1560, 60, 40],
  [1100, 830, 80, 50], [1700, 720, 60, 50], [830, 1310, 50, 90],
];

const FeatureMap = () => (
  <svg width="840" height="399" viewBox="66 651 2520 1197">
    <Basemap id="f" />
    <defs>
      <filter id="contour" x="0" y="0" width="1" height="1" colorInterpolationFilters="sRGB">
        <feTurbulence type="fractalNoise" baseFrequency="0.015" numOctaves="4" seed="21" result="n" />
        <feColorMatrix in="n" values="0 0 0 0 0.933  0 0 0 0 0.19  0 0 0 0 0.14  0 0 0 1 0" result="a" />
        <feComponentTransfer in="a" result="lines">
          <feFuncA type="discrete" tableValues="0 0 0 0 0 0 0 0 0 0 0 0 0 0 0 1 0 0 0 1 0 0 0 0 1 0 0 0 0 0 0 0 0 0 0 0 0 0 0 0" />
        </feComponentTransfer>
        <feTurbulence type="fractalNoise" baseFrequency="0.009" numOctaves="3" seed="33" result="low" />
        <feColorMatrix in="low" values="0 0 0 0 1  0 0 0 0 1  0 0 0 0 1  0 0 0 30 -13.9" result="zones" />
        <feComposite in="lines" in2="zones" operator="in" />
      </filter>
      <filter id="specks" x="0" y="0" width="1" height="1" colorInterpolationFilters="sRGB">
        <feTurbulence type="fractalNoise" baseFrequency="0.03 0.036" numOctaves="3" seed="4" result="n" />
        <feColorMatrix in="n" values="0 0 0 0 0.933  0 0 0 0 0.19  0 0 0 0 0.14  0 0 0 30 -20.4" />
      </filter>
      <filter id="jagged" x="-0.1" y="-0.1" width="1.2" height="1.2" colorInterpolationFilters="sRGB">
        <feTurbulence type="fractalNoise" baseFrequency="0.03" numOctaves="3" seed="9" />
        <feDisplacementMap in="SourceGraphic" scale="26" xChannelSelector="R" yChannelSelector="G" />
      </filter>
      <filter id="feather" x="-0.3" y="-0.3" width="1.6" height="1.6">
        <feGaussianBlur stdDeviation="7" />
      </filter>
      <mask id="land" maskUnits="userSpaceOnUse" x="670" y="640" width="1332" height="1220">
        <rect x="670" y="640" width="1332" height="1220" fill="#fff" />
        <g filter="url(#jagged)">
          {openZones.map(([x, y, rx, ry]) => (
            <ellipse key={`${x}-${y}`} cx={x} cy={y} rx={rx * 0.85} ry={ry * 0.85} fill="#000" fillOpacity="0.85" />
          ))}
        </g>
        <path d={BAY} fill="#000" transform={CENTRE} />
        <path d="M490 400L520 340L575 345L600 400L640 430L660 500L680 590L620 580L520 540L485 430Z" fill="#000" fillOpacity="0.8" transform={CENTRE} />
      </mask>
      <clipPath id="study">
        <rect x="670" y="640" width="1330" height="1220" />
      </clipPath>
    </defs>
    <rect x="670" y="640" width="1330" height="1220" fill="#ee3124" fillOpacity="0.5" />
    <g mask="url(#land)">
      <rect x="670" y="640" width="1330" height="1220" filter="url(#contour)" />
      <rect x="670" y="640" width="1330" height="1220" filter="url(#specks)" />
    </g>
    <g clipPath="url(#study)">
      <g transform={CENTRE} fill="none" stroke="#ee3124" strokeWidth="6" strokeLinejoin="round">
        <path d={BAY} filter="url(#jagged)" />
        <path
          d="M0 370L50 372L60 430L90 470L130 500L150 560L165 632M200 610L290 520L300 440L330 350L380 340L440 370L520 375L490 400L485 430L500 490L380 495L360 450L360 400L430 390M390 510L480 490L560 545L640 560M300 510L320 560L200 620M500 430L560 470L610 470L600 510L540 500M1000 380L940 420L870 470L850 560M1000 380L1040 440L1090 500L1110 600L1100 720L1040 740M1280 690L1320 700L1340 750M1270 760L1305 750M900 700L880 760L940 800L1040 840"
          filter="url(#jagged)"
        />
      </g>
    </g>
    <path d="M671 640V1860M2000 640V1860" stroke="#ee3124" strokeWidth="4" />
    {landUseNodes.map(([x, y], k) => (
      <polygon key={k} points={pentagon(x, y, (k * 7) % 5)} fill="none" stroke="#0000ff" strokeWidth="6.5" />
    ))}
  </svg>
);

const RINGS = { b: '#0000ff', g: '#808080', r: '#eb3223', d: '#75140c' };

const resultNodes: [number, number, keyof typeof RINGS, string][] = [
  [633, 650, 'd', '#ee5545'],
  [1254, 1138, 'g', '#ea5548'], [1243, 1075, 'r', '#e3e35f'], [1210, 1068, 'b', '#e0e860'],
  [1233, 1117, 'b', '#f0b050'], [1268, 1174, 'r', '#ea5045'], [1185, 1149, 'b', '#f3f169'],
  [1221, 1203, 'b', '#f3f169'], [1175, 1233, 'b', '#f3f169'], [1272, 1220, 'g', '#ecc455'],
  [1258, 1275, 'b', '#f0f065'], [1288, 1255, 'b', '#ee8c4c'], [1313, 1213, 'b', '#f3d860'],
  [1337, 1155, 'b', '#f3f169'], [1328, 1291, 'b', '#f3f169'],
  [1029, 1532, 'g', '#ea5548'], [1133, 1548, 'b', '#ec6a48'], [1139, 1512, 'b', '#ef8550'],
  [1094, 1558, 'r', '#e3e050'], [1178, 1492, 'b', '#e0e860'], [1223, 1492, 'd', '#ea5548'],
  [1178, 1568, 'b', '#f3f169'], [1172, 1593, 'b', '#f0b050'], [1117, 1615, 'b', '#f07a48'],
  [1003, 1657, 'b', '#f0b050'], [977, 1634, 'b', '#f5f35f'], [1022, 1628, 'b', '#e8e860'],
  [961, 1697, 'b', '#f3d050'], [1023, 1712, 'b', '#f3c050'], [974, 1731, 'b', '#ea5a48'],
  [922, 1741, 'b', '#f3f169'], [1081, 1693, 'b', '#ea5a48'], [1117, 1731, 'b', '#ea5a48'],
  [1097, 1754, 'b', '#f0b050'], [1029, 1778, 'b', '#e8504a'], [1132, 1825, 'b', '#f0b050'],
  [1122, 1790, 'r', '#ea5045'], [1201, 1816, 'g', '#ea5548'],
];

const ResultsMap = () => (
  <svg width="840" height="406" viewBox="66 630 2520 1218">
    <g transform={SOUTH}>
      <Basemap id="r" />
    </g>
    {resultNodes.map(([x, y, ring, fill], k) => (
      <circle key={k} cx={x} cy={y} r="20" fill={fill} stroke={RINGS[ring]} strokeWidth="7.5" />
    ))}
  </svg>
);

const legendItems: [string, string][] = [
  ['Imbalanced node', '#808080'],
  ['Training node', '#0000ff'],
  ['Central test node', '#eb3223'],
  ['Fringe test node', '#75140c'],
];

const ticks: [string, number][] = [['-0.01', 72.7], ['0.2', 81], ['0.3', 81], ['0.5', 81], ['0.7', 60]];

export default function App() {
  return (
    <Page>
      <GlobalStyle />
      <Header>
        <Title>bayareaco2 Explore</Title>
      </Header>
      <Main>
        <Paragraph>
          Welcome to the bayareaco2 Explore page. This interactive page is designed to help visualize the data and
          results associated with the bayareaco2 prediction models. The Feature Explorer demonstrates the feature data
          used to train the models, as well as the BEACO2N sensor locations. The Results Explorer gives a spatial
          representation of model performance. You can explore performance metrics for different models and for
          individual nodes. The data plotted on these maps is meant to be interacted with, so feel free to click and
          scroll around! Some feature maps have been optimized for the webpage interface.
          <br />
          Select an Explore page below to get started:
        </Paragraph>
        <Explorers>
          <Explorer>
            <Card>
              <CardHead $height={146} $top={17} $right={19}>
                <CardTitle $size={26.3}>Interactive Feature Maps</CardTitle>
                <CardLine $size={17.5}>Select a feature map to view.</CardLine>
                <CardLine $size={17.5}>Click on plotted polygons to view feature attributes.</CardLine>
              </CardHead>
              <TabBar $start={155}>
                <Tab>Nodes</Tab>
                <Tab $active>Land Use</Tab>
                <Tab>Industrial</Tab>
                <Tab>AADT</Tab>
                <Tab>Roads</Tab>
                <Tab>Population Density</Tab>
              </TabBar>
              <MapFrame>
                <FeatureMap />
              </MapFrame>
            </Card>
            <Button>Feature Explorer</Button>
          </Explorer>
          <Explorer>
            <Card>
              <CardHead $height={140} $top={12.5} $left={11}>
                <CardTitle $size={26}>Interactive Results Maps</CardTitle>
                <CardLine $size={17.3}>Select a model to view.</CardLine>
                <CardLine $size={17.3}>Click on nodes to view model performance.</CardLine>
              </CardHead>
              <TabBar $start={325}>
                <Tab $active>LUR</Tab>
                <Tab>XGBoost</Tab>
                <Tab>CNN</Tab>
              </TabBar>
              <MapFrame>
                <ResultsMap />
                <Legend>
                  <LegendTitle>Node Category</LegendTitle>
                  <LegendRows>
                    {legendItems.map(([name, color]) => (
                      <LegendRow key={name}>
                        <Ring $color={color} />
                        <LegendLabel>{name}</LegendLabel>
                      </LegendRow>
                    ))}
                  </LegendRows>
                  <LegendTitle>R² Colorbar</LegendTitle>
                  <ColorBar />
                  <Scale>
                    {ticks.map(([value, width]) => (
                      <Tick key={value} $width={width}>{value}</Tick>
                    ))}
                  </Scale>
                </Legend>
              </MapFrame>
            </Card>
            <Button>Results Explorer</Button>
          </Explorer>
        </Explorers>
      </Main>
      <About>
        <Heading>About This Site</Heading>
        <Paragraph>
          This page is hosted by GitHub Pages from the irp-acs223 GitHub repository. The work presented here was
          completed by Anna C. Smith, under the supervision of Fangxin Fang and Linfeng Li in completion of her MSc in
          Environmental Data Science and Machine Learning at Imperial College London. Consult the repository for more
          code and information about the project. Contact anna.smith23@imperial.ac.uk with any questions.
        </Paragraph>
      </About>
      <Footer>© 2024 Anna C. Smith. All rights reserved.</Footer>
    </Page>
  );
}
